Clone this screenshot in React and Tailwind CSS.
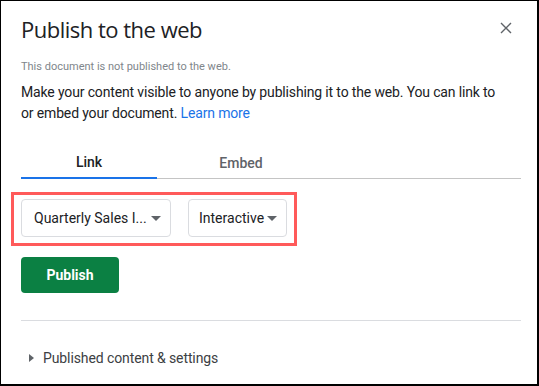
export default function App() {
  return (
    <div className="w-[539px] h-[386px] bg-white border-l border-t border-r-2 border-b-2 border-black box-border font-['Roboto',sans-serif] text-[#202124]">
      <div className="pl-[20px] pr-[16px]">
        <div className="flex items-start justify-between pt-[14px]">
          <h1 className="text-[22px] leading-[28px] text-[#202124] font-['Open_Sans',sans-serif] tracking-[-0.5px]">Publish to the web</h1>
          <button className="mt-[6px] mr-[8px] w-[14px] h-[14px] flex items-center justify-center text-[#5f6368]">
            <svg width="12" height="12" viewBox="0 0 12 12" fill="none" stroke="currentColor" strokeWidth="1.4">
              <path d="M1 1L11 11M11 1L1 11" />
            </svg>
          </button>
        </div>
        <p className="mt-[17px] text-[11px] leading-[14px] text-[#80868b]">This document is not published to the web.</p>
        <p className="mt-[8px] text-[14px] leading-[21px] text-[#202124] tracking-[-0.15px] pr-[20px]">
          Make your content visible to anyone by publishing it to the web. You can link to or embed your document. <span className="text-[#1a73e8]">Learn more</span>
        </p>
        <div className="mt-[24px] flex border-b border-[#c4c4c4] h-[31px]">
          <div className="w-[136px] flex items-center justify-center text-[14px] font-medium text-[#202124] border-b-2 border-[#1a73e8] -mb-px">Link</div>
          <div className="w-[168px] flex items-center justify-center text-[14px] font-medium text-[#5f6368]">Embed</div>
        </div>
        <div className="mt-[13px] -ml-[10px] w-[286px] h-[54px] border-[3px] border-[#ff5a5a] flex items-start pt-[4px] pl-[7px] gap-[17px]">
          <div className="w-[150px] h-[38px] border border-[#dadce0] rounded-[4px] flex items-center pl-[12px] pr-[9px] justify-between text-[14px] text-[#202124]">
            <span>Quarterly Sales I...</span>
            <svg width="10" height="5" viewBox="0 0 10 5"><path d="M0 0L10 0L5 5Z" fill="#5f6368" /></svg>
          </div>
          <div className="w-[99px] h-[38px] border border-[#dadce0] rounded-[4px] flex items-center pl-[10px] pr-[9px] justify-between text-[14px] text-[#202124]">
            <span>Interactive</span>
            <svg width="10" height="5" viewBox="0 0 10 5"><path d="M0 0L10 0L5 5Z" fill="#5f6368" /></svg>
          </div>
        </div>
        <button className="mt-[11px] w-[98px] h-[36px] rounded-[4px] bg-[#0b8043] text-white text-[14px] font-bold flex items-center justify-center">Publish</button>
        <div className="mt-[27px] border-t border-[#dadce0]"></div>
        <div className="mt-[27px] h-[20px] flex items-center text-[14px] text-[#3c4043] tracking-[-0.1px]">
          <svg width="5" height="8" viewBox="0 0 5 8" className="ml-[8px] mr-[9px]"><path d="M0 0L5 4L0 8Z" fill="#5f6368" /></svg>
          <span>Published content &amp; settings</span>
        </div>
      </div>
    </div>
  );
}
